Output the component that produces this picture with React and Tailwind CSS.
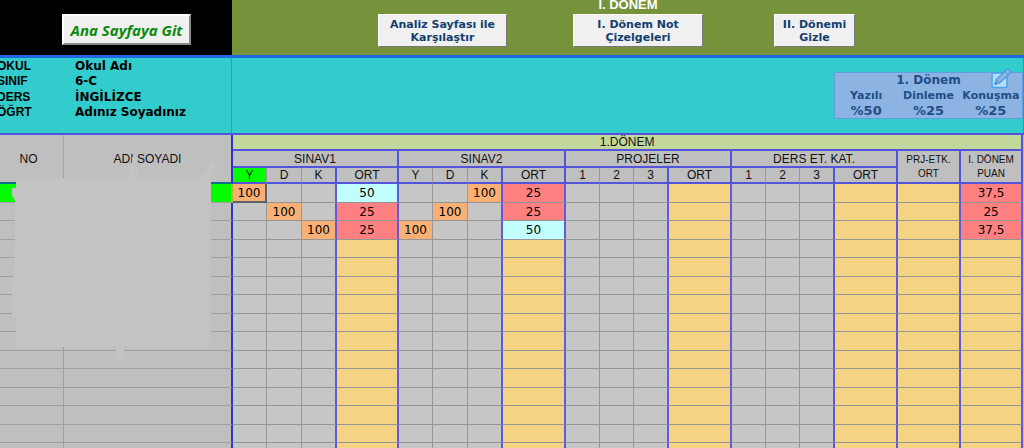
import React from "react";

const COLUMN_WIDTHS = [
  "w-[64px]", "w-[169px]",
  "w-[34px]", "w-[35px]", "w-[35px]", "w-[62px]",
  "w-[34px]", "w-[35px]", "w-[35px]", "w-[63px]",
  "w-[34px]", "w-[34px]", "w-[35px]", "w-[63px]",
  "w-[34px]", "w-[34px]", "w-[35px]", "w-[63px]",
  "w-[63px]", "w-[62px]",
];

const GROUPS = [
  { title: "SINAV1", parts: ["Y", "D", "K"] },
  { title: "SINAV2", parts: ["Y", "D", "K"] },
  { title: "PROJELER", parts: ["1", "2", "3"] },
  { title: "DERS ET. KAT.", parts: ["1", "2", "3"] },
];

// Grade values keyed by column position, counted from the first exam column.
const GRADES = [
  { 0: "100", 3: "50", 6: "100", 7: "25", 17: "37,5" },
  { 1: "100", 3: "25", 5: "100", 7: "25", 17: "25" },
  { 2: "100", 3: "25", 4: "100", 7: "50", 17: "37,5" },
];

const ROWS = Array.from({ length: 15 }, (_, i) => GRADES[i] || {});
const CELLS = Array.from({ length: 18 }, (_, i) => i);

const isAverage = (c) => c >= 16 || c % 4 === 3;
const hasBlueEdge = (c) => c >= 15 || c % 4 >= 2;

function cellColor(c, value) {
  if (isAverage(c)) {
    if (!value) return "bg-[#f4d384]";
    return value === "50" ? "bg-[#c2ffff]" : "bg-[#ff8080]";
  }
  return value ? "bg-[#f9b074]" : "bg-[#c6c6c6]";
}

function ToolButton({ children, className }) {
  return (
    <button
      type="button"
      className={`h-[33px] border border-t-white border-l-white border-r-[#777] border-b-[#777] bg-[#f0f0f0] text-center text-[11px] leading-[13px] font-bold text-[#123f70] ${className}`}
    >
      {children}
    </button>
  );
}

function EditIcon() {
  return (
    <svg viewBox="0 0 22 22" className="h-[22px] w-[22px]" fill="none" aria-hidden="true">
      <rect x="2" y="5" width="15" height="14.5" rx="1.5" fill="#b9dbfa" stroke="#4ba3ea" strokeWidth="1.6" />
      <path d="M5 16.5 6.3 11.5 16.6 1.8Q18 .7 19.4 2T20 5L9.6 15Z" fill="#8db8e6" stroke="#4b9be0" strokeWidth="1.3" strokeLinejoin="round" />
      <path d="M15 3.4 18.3 6.7M6.3 11.5 9.6 15" stroke="#4b93d4" strokeWidth="1" />
      <path d="M5 16.5 5.8 14 7.5 15.8Z" fill="#2f73b8" />
    </svg>
  );
}

const INFO = [
  ["OKUL", "Okul Adı"],
  ["SINIF", "6-C"],
  ["DERS", "İNGİLİZCE"],
  ["ÖĞRT", "Adınız Soyadınız"],
];

const WEIGHTS = [
  ["Yazılı", "%50"],
  ["Dinleme", "%25"],
  ["Konuşma", "%25"],
];

const HEAD = "border-[#5353dc] p-0 text-center font-normal";

export default function App() {
  return (
    <div className="h-screen overflow-hidden bg-[#bfbfbf] font-['DejaVu_Sans',sans-serif] text-black">
      <header className="flex h-[58px] border-b-3 border-[#2068e0]">
        <div className="w-[232px] shrink-0 bg-black pt-[14px] pl-[62px]">
          <button
            type="button"
            className="h-[31px] w-[129px] border-2 border-t-white border-l-white border-r-[#888] border-b-[#888] bg-[#f0f0f0] font-['Comic_Sans_MS','Open_Sans',sans-serif] text-[15px] leading-5 font-bold whitespace-nowrap text-[#0a8a0a] italic"
          >
            Ana Sayfaya Git
          </button>
        </div>
        <div className="relative flex grow items-start bg-[#76933c] pt-[14px] pl-[146px]">
          <h1 className="absolute inset-x-0 top-[-3px] text-center font-['Liberation_Sans',sans-serif] text-[13px] leading-4 font-bold text-white">
            I. DÖNEM
          </h1>
          <ToolButton className="w-[129px]">Analiz Sayfası ile<br />Karşılaştır</ToolButton>
          <ToolButton className="ml-[66px] w-[130px]">I. Dönem Not<br />Çizelgeleri</ToolButton>
          <ToolButton className="ml-[71px] w-[81px]">II. Dönemi<br />Gizle</ToolButton>
        </div>
      </header>

      <section className="flex h-[77px] border-b-2 border-[#5353dc] bg-[#33cccc]">
        <dl className="w-[232px] shrink-0 overflow-hidden border-r border-[#2ba3a8] font-bold">
          {INFO.map(([label, value]) => (
            <div key={label} className="flex leading-[15px] odd:leading-4">
              <dt className="-ml-[3px] w-[78px] shrink-0 font-['Liberation_Sans',sans-serif] text-[12px]">{label}</dt>
              <dd className="text-[12px] whitespace-nowrap">{value}</dd>
            </div>
          ))}
        </dl>
        <div className="flex grow justify-end border-r border-[#708080] pt-[14px]">
          <div className="relative h-[47px] w-[189px] border border-[#5c9fdc] bg-[#8db3e2] text-center font-bold text-[#1f4e87]">
            <h2 className="text-[12px] leading-[15px]">1. Dönem</h2>
            <div className="grid grid-cols-3">
              {WEIGHTS.map(([name, share]) => (
                <div key={name}>
                  <p className="text-[11px] leading-4">{name}</p>
                  <p className="text-[13px] leading-[14px]">{share}</p>
                </div>
              ))}
            </div>
            <button type="button" aria-label="Düzenle" className="absolute -top-[5px] right-[10px]">
              <EditIcon />
            </button>
          </div>
        </div>
      </section>

      <main className="relative pr-px">
        <table className="w-full table-fixed border-separate border-spacing-0 text-[12px]">
          <colgroup>
            {COLUMN_WIDTHS.map((w, i) => <col key={i} className={w} />)}
          </colgroup>
          <thead className="bg-[#bfbfbf] font-['Liberation_Sans',sans-serif] leading-[14px] text-[#111]">
            <tr className="h-4">
              <th rowSpan={3} className="border-r border-b-2 border-r-[#a5a5a5] border-b-[#107088] p-0 pr-[6px] font-normal">NO</th>
              <th rowSpan={3} className="border-r-2 border-b-2 border-r-[#3333cc] border-b-[#107088] p-0 font-normal">ADI SOYADI</th>
              <th colSpan={18} className={`${HEAD} border-r-2 border-b-2 bg-[#c4d79b]`}>1.DÖNEM</th>
            </tr>
            <tr className="h-[17px]">
              {GROUPS.map((g) => (
                <th key={g.title} colSpan={4} className={`${HEAD} border-r-2 border-b-2`}>{g.title}</th>
              ))}
              <th rowSpan={2} className={`${HEAD} border-r-2 border-b-2 text-[10px]`}>PRJ-ETK.<br />ORT</th>
              <th rowSpan={2} className={`${HEAD} border-r-2 border-b-2 text-[10px]`}>I. DÖNEM<br />PUAN</th>
            </tr>
            <tr className="h-4">
              {GROUPS.flatMap((g, gi) =>
                [...g.parts, "ORT"].map((p, pi) => (
                  <th
                    key={g.title + p}
                    className={`${HEAD} border-b-2 ${pi >= 2 ? "border-r-2" : "border-r border-r-[#999]"} ${gi === 0 && pi === 0 ? "bg-[#00ff00]" : ""}`}
                  >
                    {p}
                  </th>
                ))
              )}
            </tr>
          </thead>
          <tbody className="leading-4">
            {ROWS.map((row, r) => (
              <tr key={r} className="h-[19px] even:h-[18px]">
                <td className={`border-r border-b border-[#a0a0a0] p-0 ${r === 0 ? "bg-[#00ff00]" : "bg-[#bfbfbf]"}`} />
                <td className={`border-r-2 border-b border-b-[#a0a0a0] p-0 ${r === 0 ? "border-r-[#b0b830] bg-[#00ff00]" : "border-r-[#3333cc] bg-[#bfbfbf]"}`} />
                {CELLS.map((c) => (
                  <td
                    key={c}
                    className={`border-b p-0 text-center ${r === 0 && c === 0 ? "border-r-2 border-b-2 border-[#59616b]" : `border-b-[#959595] ${hasBlueEdge(c) ? "border-r-2 border-r-[#5f5ade]" : "border-r border-r-[#999]"}`} ${cellColor(c, row[c])}`}
                  >
                    {row[c]}
                  </td>
                ))}
              </tr>
            ))}
          </tbody>
        </table>

        <svg
          className="absolute top-[20px] left-[11px] h-[206px] w-[206px]"
          viewBox="0 0 206 206"
          fill="#c3c3c3"
          aria-hidden="true"
        >
          <path d="M5 23H200V192H113V201Q112 205 109 205T105 201V192H5V162H1V134Q4 110 4 83V46L1 40V33H5Z" />
          <path d="M118 23V12Q122 8 127 12V23ZM189 23 201 7 205 9 198 23ZM121 2H126V9H121Z" />
        </svg>
      </main>
    </div>
  );
}
